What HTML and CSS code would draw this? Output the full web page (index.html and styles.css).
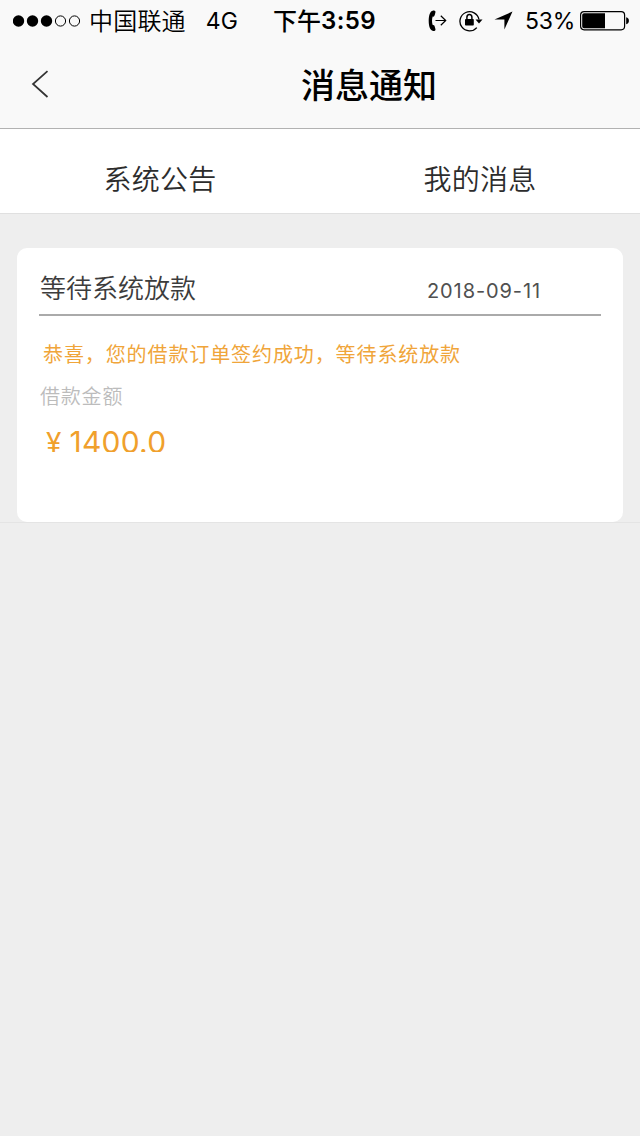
FILE: index.html
```html
<!DOCTYPE html>
<html lang="zh-CN">
<head>
<meta charset="utf-8">
<title>消息通知</title>
<link rel="stylesheet" href="styles.css">
</head>
<body>
<header class="header">
  <div class="status">
    <div class="status-left">
      <svg class="signal" width="68" height="12" viewBox="0 0 68 12">
        <circle cx="5.500" cy="6" r="5.700"/><circle cx="19.500" cy="6" r="5.700"/><circle cx="33.500" cy="6" r="5.700"/>
        <g fill="none" stroke="#000"><circle cx="47.500" cy="6" r="5.100"/><circle cx="61.500" cy="6" r="5.100"/></g>
      </svg>
      <span class="carrier">中国联通</span>
      <span class="network">4G</span>
    </div>
    <div class="time"><span class="time-period">下午</span><span class="time-digits">3:59</span></div>
    <div class="status-right">
      <svg class="call" width="20" height="22" viewBox="0 0 20 22">
        <path d="M5.200.5C1.800 1 .7 5.800.7 10.800s1.100 9.500 4.500 10.200c1.100.2 2.300-.6 2.300-1.300 0-.8-.7-3.100-1.200-4.100-.3-.6-.9-.8-1.600-.6-.9-2.400-.9-6 0-8.400.7.200 1.300 0 1.600-.6.500-1 1.200-3.400 1.200-4.200C7.500 1 6.300.3 5.200.5z"/>
        <path d="M7.500 10.500H17.500M12.800 5.800l4.900 4.700-4.900 4.700" fill="none" stroke="#000" stroke-width="1.200"/>
      </svg>
      <svg class="lock" width="24" height="22" viewBox="0 0 24 22">
        <path d="M20 9.500A9.600 9.600 0 1 0 17.800 17.600" fill="none" stroke="#000" stroke-width="1.300"/>
        <path d="M16.500 9.500h7l-3.500 4z"/>
        <rect x="6" y="9" width="8.800" height="6.500" rx=".8"/>
        <path d="M7.900 9.500V7.300a2.500 2.800 0 0 1 5 0V9.500" fill="none" stroke="#000" stroke-width="1.500"/>
      </svg>
      <svg class="location" width="19" height="19" viewBox="0 0 19 19">
        <path d="M18.500.5L10.400 18.400V8.600H.5z"/>
      </svg>
      <span class="percent">53%</span>
      <svg class="battery" width="50" height="20" viewBox="0 0 50 20">
        <rect x=".6" y=".6" width="44" height="18.200" rx="3.500" fill="none" stroke="#000" stroke-width="1.200"/>
        <path d="M4 2.200h21v15H4a1.800 1.800 0 0 1-1.800-1.800V4A1.800 1.800 0 0 1 4 2.200z"/>
        <path d="M46.200 6.200c3.600.8 3.600 6.200 0 7z"/>
      </svg>
    </div>
  </div>
  <nav class="navbar">
    <svg class="back" width="20" height="30" viewBox="0 0 20 30">
      <path d="M17.500 1.200L3 14l14.500 13" fill="none" stroke="#333" stroke-width="1.700"/>
    </svg>
    <h1 class="title">消息通知</h1>
  </nav>
</header>
<div class="tabs">
  <div class="tab">系统公告</div>
  <div class="tab">我的消息</div>
</div>
<main class="list">
  <article class="card">
    <div class="card-head">
      <h2 class="card-title">等待系统放款</h2>
      <time class="date">2018-09-11</time>
    </div>
    <p class="message">恭喜，您的借款订单签约成功，等待系统放款</p>
    <p class="label">借款金额</p>
    <p class="amount"><span class="currency">¥</span>1400.0</p>
  </article>
</main>
</body>
</html>
```
FILE: styles.css
```css
* { box-sizing: border-box; margin: 0; padding: 0; }
body {
  width: 640px;
  min-height: 1136px;
  background: #eee;
  color: #000;
  font-family: Inter, "Noto Sans CJK SC", sans-serif;
  white-space: nowrap;
}
svg { display: block; flex: none; }
.header { height: 129px; background: #f9f9f9; border-bottom: 1px solid #b2b2b2; }
.status {
  display: grid;
  grid-template-columns: 273px 155px 212px;
  height: 41px;
  line-height: 36px;
  font-size: 24px;
}
.status-left, .time, .status-right { display: flex; align-items: center; }
.signal { margin-left: 13px; }
.carrier { margin: 0 0 2px 8px; letter-spacing: .2px; font-weight: 350; font-family: "Noto Sans CJK SC", sans-serif; }
.network { margin-left: 20px; font-size: 23px; }
.time-period { margin-bottom: 2px; font-weight: 500; font-family: "Noto Sans CJK SC", sans-serif; }
.time-digits { font-weight: 600; font-size: 24px; letter-spacing: .4px; }
.lock { margin-left: 11px; }
.location { margin-left: 11px; }
.percent { width: 49px; margin-left: 12px; font-size: 23px; letter-spacing: -.2px; }
.battery { margin-left: 6px; }
.navbar { display: grid; grid-template-columns: 100px 1fr 100px; height: 87px; align-items: center; }
.back { margin-left: 30px; }
.title { padding: 2px 0 0 98px; text-align: center; font-size: 34px; font-weight: 500; line-height: 50px; }
.tabs {
  display: grid;
  grid-template-columns: 1fr 1fr;
  height: 85px;
  padding-top: 9px;
  background: #fff;
  border-bottom: 1px solid #e0e0e0;
}
.tab { text-align: center; font-size: 28px; font-weight: 350; line-height: 84px; color: #2c2c2c; letter-spacing: .3px; }
.list { padding: 34px 17px 0; border-bottom: 1px solid #e4e4e4; }
.card { height: 274px; padding: 0 22px; background: #fff; border-radius: 10px; }
.card-head {
  display: grid;
  grid-template-columns: 388px 1fr;
  height: 68px;
  border-bottom: 2px solid #aaa;
}
.card-title { padding-left: 1px; font-size: 26px; font-weight: 350; line-height: 82px; color: #3c3c3c; }
.date { font-size: 20px; line-height: 86px; color: #505050; letter-spacing: .9px; }
.message { margin: 24px 0 0 4px; font-size: 20px; line-height: 30px; letter-spacing: .9px; color: #f0a53a; }
.label { margin: 12px 0 0 1px; font-size: 20px; font-weight: 350; line-height: 30px; letter-spacing: .8px; color: #bcbcbc; }
.amount { height: 34px; margin: 6px 0 0 7px; overflow: hidden; font-size: 30px; line-height: 48px; color: #f0a02c; letter-spacing: .2px; }
.currency { margin-right: 8px; font-size: 28px; }
```
